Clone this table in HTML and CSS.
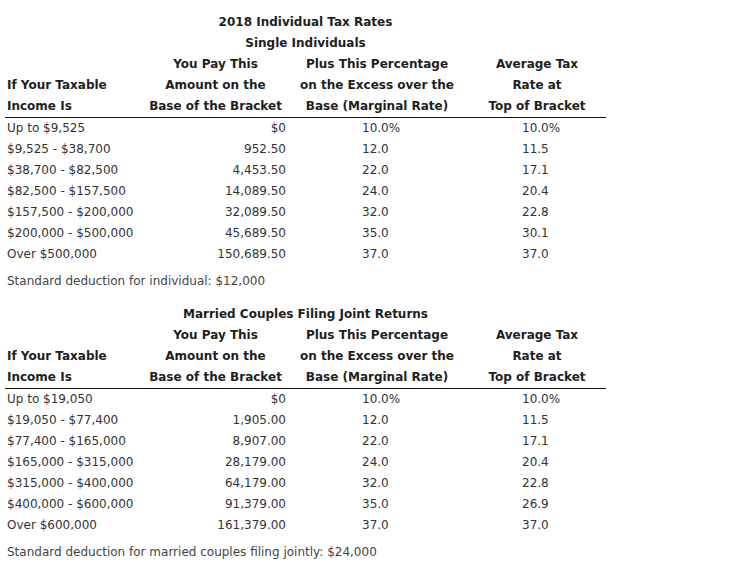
FILE: index.html
```html
<!DOCTYPE html>
<html>
<head>
<meta charset="utf-8">
<link rel="stylesheet" href="styles.css">
</head>
<body>
<div class="page">
  <section class="block">
    <div class="title">2018 Individual Tax Rates</div>
    <div class="title">Single Individuals</div>
    <div class="table">
      <div class="hdr c1"><span>&nbsp;</span><span>If Your Taxable</span><span>Income Is</span></div>
      <div class="hdr c2"><span>You Pay This</span><span>Amount on the</span><span>Base of the Bracket</span></div>
      <div class="hdr c3"><span>Plus This Percentage</span><span>on the Excess over the</span><span>Base (Marginal Rate)</span></div>
      <div class="hdr c4"><span>Average Tax</span><span>Rate at</span><span>Top of Bracket</span></div>
      <div class="rule"></div>
      <div class="cell c1">Up to $9,525</div><div class="cell c2">$0</div><div class="cell c3">10.0%</div><div class="cell c4">10.0%</div>
      <div class="cell c1">$9,525 - $38,700</div><div class="cell c2">952.50</div><div class="cell c3">12.0</div><div class="cell c4">11.5</div>
      <div class="cell c1">$38,700 - $82,500</div><div class="cell c2">4,453.50</div><div class="cell c3">22.0</div><div class="cell c4">17.1</div>
      <div class="cell c1">$82,500 - $157,500</div><div class="cell c2">14,089.50</div><div class="cell c3">24.0</div><div class="cell c4">20.4</div>
      <div class="cell c1">$157,500 - $200,000</div><div class="cell c2">32,089.50</div><div class="cell c3">32.0</div><div class="cell c4">22.8</div>
      <div class="cell c1">$200,000 - $500,000</div><div class="cell c2">45,689.50</div><div class="cell c3">35.0</div><div class="cell c4">30.1</div>
      <div class="cell c1">Over $500,000</div><div class="cell c2">150,689.50</div><div class="cell c3">37.0</div><div class="cell c4">37.0</div>
    </div>
    <p class="note">Standard deduction for individual: $12,000</p>
  </section>
  <section class="block second">
    <div class="title">Married Couples Filing Joint Returns</div>
    <div class="table">
      <div class="hdr c1"><span>&nbsp;</span><span>If Your Taxable</span><span>Income Is</span></div>
      <div class="hdr c2"><span>You Pay This</span><span>Amount on the</span><span>Base of the Bracket</span></div>
      <div class="hdr c3"><span>Plus This Percentage</span><span>on the Excess over the</span><span>Base (Marginal Rate)</span></div>
      <div class="hdr c4"><span>Average Tax</span><span>Rate at</span><span>Top of Bracket</span></div>
      <div class="rule"></div>
      <div class="cell c1">Up to $19,050</div><div class="cell c2">$0</div><div class="cell c3">10.0%</div><div class="cell c4">10.0%</div>
      <div class="cell c1">$19,050 - $77,400</div><div class="cell c2">1,905.00</div><div class="cell c3">12.0</div><div class="cell c4">11.5</div>
      <div class="cell c1">$77,400 - $165,000</div><div class="cell c2">8,907.00</div><div class="cell c3">22.0</div><div class="cell c4">17.1</div>
      <div class="cell c1">$165,000 - $315,000</div><div class="cell c2">28,179.00</div><div class="cell c3">24.0</div><div class="cell c4">20.4</div>
      <div class="cell c1">$315,000 - $400,000</div><div class="cell c2">64,179.00</div><div class="cell c3">32.0</div><div class="cell c4">22.8</div>
      <div class="cell c1">$400,000 - $600,000</div><div class="cell c2">91,379.00</div><div class="cell c3">35.0</div><div class="cell c4">26.9</div>
      <div class="cell c1">Over $600,000</div><div class="cell c2">161,379.00</div><div class="cell c3">37.0</div><div class="cell c4">37.0</div>
    </div>
    <p class="note">Standard deduction for married couples filing jointly: $24,000</p>
  </section>
</div>
</body>
</html>
```
FILE: styles.css
```css
html, body {
  margin: 0;
  padding: 0;
  background: #ffffff;
}
body {
  font-family: "DejaVu Sans", Verdana, sans-serif;
  font-size: 12px;
  color: #333333;
}
.page {
  width: 601px;
  margin-left: 5px;
  padding-top: 12px;
}
.title {
  text-align: center;
  font-weight: bold;
  color: #1e1e1e;
  line-height: 21px;
}
.table {
  display: grid;
  grid-template-columns: 140px 145px 174px 142px;
}
.hdr {
  display: flex;
  flex-direction: column;
  font-weight: bold;
  color: #1e1e1e;
  line-height: 21px;
  text-align: center;
}
.hdr.c1 {
  text-align: left;
  padding-left: 2px;
}
.hdr.c2 {
  padding-right: 4px;
}
.hdr.c4 {
  padding-left: 4px;
}
.rule {
  grid-column: 1 / -1;
  height: 1px;
  background: #111111;
}
.cell {
  line-height: 21px;
  white-space: nowrap;
}
.cell.c1 {
  padding-left: 2px;
}
.cell.c2 {
  text-align: right;
  padding-right: 4px;
}
.cell.c3 {
  padding-left: 72px;
}
.cell.c4 {
  padding-left: 58px;
}
.note {
  margin: 6px 0 0 0;
  padding-left: 2px;
  line-height: 21px;
  color: #444444;
  white-space: nowrap;
}
.second {
  margin-top: 12px;
}
.second .note {
  margin-top: 6px;
}
```
